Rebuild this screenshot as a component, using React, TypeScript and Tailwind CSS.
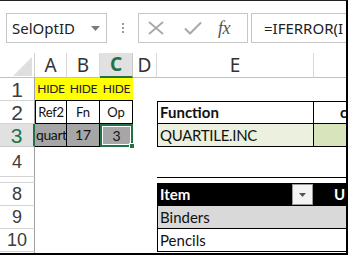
import React from 'react';

const cols = 'grid grid-cols-[35px_32px_33px_33px_24px_157px_32px] grid-rows-[100%]';
const cell = "font-['Lato',sans-serif] text-[#111] overflow-hidden whitespace-nowrap flex items-center";
const rowHead = "font-['Liberation_Sans',Arial,sans-serif] text-[#3c3c3c] border-r border-r-[#a0a0a0] border-b border-b-[#d4d4d4] flex items-center justify-center bg-white";

const App = () => {
  return (
    <div className="w-[348px] h-[255px] overflow-hidden bg-white leading-none border-t border-t-[#222] border-r-2 border-b-2 border-black">
      {/* Formula bar */}
      <div className="h-[52px] flex items-start pt-[12px]">
        <div className="ml-[6px] w-[101px] h-[30px] border border-[#c6c6c6] flex items-center pl-[5px] pr-[6px]">
          <span className="font-['Noto_Sans',sans-serif] text-[15px] text-[#222]">SelOptID</span>
          <svg className="ml-auto" width="9" height="5" viewBox="0 0 9 5">
            <path d="M0 0 H9 L4.5 5 Z" fill="#7a7a7a" />
          </svg>
        </div>
        <div className="w-[31px] h-[30px] flex flex-col items-center justify-center gap-[2px]">
          <span className="w-[2px] h-[2px] bg-[#9a9a9a]" />
          <span className="w-[2px] h-[2px] bg-[#9a9a9a]" />
          <span className="w-[2px] h-[2px] bg-[#9a9a9a]" />
        </div>
        <div className="w-[110px] h-[30px] border border-[#c6c6c6] flex items-center">
          <svg className="ml-[9px]" width="16" height="14" viewBox="0 0 16 14">
            <path d="M1 1 L15 13 M15 1 L1 13" stroke="#a8a8a8" strokeWidth="1.8" fill="none" />
          </svg>
          <svg className="ml-[20px]" width="18" height="14" viewBox="0 0 18 14">
            <path d="M1 7.5 L6 12.5 L17 1.5" stroke="#a8a8a8" strokeWidth="2" fill="none" />
          </svg>
          <span className="ml-[16px] font-['Liberation_Serif',serif] italic text-[18px] text-[#555] tracking-[-0.5px]">fx</span>
        </div>
        <div className="ml-[3px] flex-1 h-[30px] border border-r-0 border-[#c6c6c6] flex items-center pl-[12px] overflow-hidden whitespace-nowrap">
          <span className="font-['Noto_Sans',sans-serif] text-[15px] text-[#222]">=IFERROR(I</span>
        </div>
      </div>

      {/* Column headers */}
      <div className={`${cols} h-[25px] font-['Noto_Sans',sans-serif] text-[19px] text-[#333]`}>
        <div className="border-r border-r-[#d0d0d0] border-b border-b-[#c0c0c0] flex items-end justify-end pr-[2px] pb-[1px]">
          <svg width="19" height="19" viewBox="0 0 19 19">
            <path d="M19 0 V19 H0 Z" fill="#dfdfdf" />
          </svg>
        </div>
        <div className="border-r border-r-[#d8d8d8] border-b border-b-[#c0c0c0] flex items-center justify-center">A</div>
        <div className="border-r border-r-[#d8d8d8] border-b border-b-[#c0c0c0] flex items-center justify-center">B</div>
        <div className="bg-[#e1e1e1] border-r border-r-[#c8c8c8] border-b-2 border-b-[#217346] flex items-center justify-center font-bold text-[#217346]">C</div>
        <div className="border-r border-r-[#d8d8d8] border-b border-b-[#c0c0c0] flex items-center justify-center">D</div>
        <div className="border-r border-r-[#d8d8d8] border-b border-b-[#c0c0c0] flex items-center justify-center">E</div>
        <div className="border-b border-b-[#c0c0c0]" />
      </div>

      {/* Row 1 */}
      <div className={`${cols} h-[23px]`}>
        <div className={`${rowHead} text-[21px]`}>1</div>
        {['HIDE', 'HIDE', 'HIDE'].map((t, i) => (
          <div key={i} className={`${cell} justify-center bg-[#ffff00] border-b border-black text-[12px] text-[#222] tracking-[-0.3px]`}>{t}</div>
        ))}
        <div />
        <div />
        <div />
      </div>

      {/* Row 2 */}
      <div className={`${cols} h-[23px]`}>
        <div className={`${rowHead} text-[21px]`}>2</div>
        <div className={`${cell} justify-center border-l border-r border-b border-black text-[13px] tracking-[-0.3px]`}>Ref2</div>
        <div className={`${cell} justify-center border-r border-b border-black text-[13px]`}>Fn</div>
        <div className={`${cell} justify-center border-r border-b border-black text-[13px]`}>Op</div>
        <div />
        <div className={`${cell} border border-black pl-[2px] text-[15px] font-bold`}>Function</div>
        <div className={`${cell} border-t border-b border-black pl-[26px] text-[15px] font-bold`}>c</div>
      </div>

      {/* Row 3 */}
      <div className={`${cols} h-[23px]`}>
        <div className="font-['Liberation_Sans',Arial,sans-serif] text-[21px] text-[#217346] bg-[#e1e1e1] border-r-2 border-r-[#217346] border-b border-b-[#c8c8c8] flex items-center justify-center">3</div>
        <div className={`${cell} bg-[#a6a6a6] border-r border-b border-black text-[14px] pl-[1px] tracking-[-0.4px]`}>quart</div>
        <div className={`${cell} justify-center bg-[#a6a6a6] border-r border-b border-black text-[14px]`}>17</div>
        <div className="relative border-2 border-[#217346] bg-white p-[1px]">
          <div className={`${cell} justify-center h-full bg-[#a6a6a6] text-[14px]`}>3</div>
          <span className="absolute right-[-4px] bottom-[-4px] w-[6px] h-[6px] bg-[#217346] border border-white" />
        </div>
        <div />
        <div className={`${cell} bg-[#ebf1de] border-l border-r border-b border-black pl-[2px] text-[15px] tracking-[-0.3px]`}>QUARTILE.INC</div>
        <div className="bg-[#d8e4bc] border-b border-black" />
      </div>

      {/* Row 4 */}
      <div className={`${cols} h-[30px]`}>
        <div className={`${rowHead} text-[18px]`}>4</div>
        <div />
        <div />
        <div />
        <div />
        <div />
        <div />
      </div>

      {/* Hidden rows 5-7 */}
      <div className={`${cols} h-[6px]`}>
        <div className="border-r border-r-[#a0a0a0] border-b border-b-[#d4d4d4]" />
        <div />
        <div />
        <div />
        <div />
        <div className="border-t border-black" />
        <div className="border-t border-black" />
      </div>

      {/* Row 8 - table header */}
      <div className={`${cols} h-[23px]`}>
        <div className={`${rowHead} text-[18px]`}>8</div>
        <div />
        <div />
        <div />
        <div />
        <div className={`${cell} bg-black text-white font-bold text-[15px] pl-[3px] pr-[1px]`}>
          <span>Item</span>
          <div className="ml-auto w-[21px] h-[21px] bg-[#f3f3f3] border border-[#9a9a9a] flex items-center justify-center">
            <svg width="7" height="4" viewBox="0 0 7 4">
              <path d="M0 0 H7 L3.5 4 Z" fill="#555" />
            </svg>
          </div>
        </div>
        <div className={`${cell} bg-black text-white font-bold text-[15px] pl-[20px]`}>U</div>
      </div>

      {/* Row 9 */}
      <div className={`${cols} h-[23px]`}>
        <div className={`${rowHead} text-[18px]`}>9</div>
        <div />
        <div />
        <div />
        <div />
        <div className={`${cell} bg-[#d9d9d9] border-l border-b border-black pl-[2px] text-[15px]`}>Binders</div>
        <div className="bg-[#d9d9d9] border-b border-black" />
      </div>

      {/* Row 10 */}
      <div className={`${cols} h-[23px]`}>
        <div className={`${rowHead} text-[18px]`}>10</div>
        <div />
        <div />
        <div />
        <div />
        <div className={`${cell} border-l border-b border-black pl-[2px] text-[15px]`}>Pencils</div>
        <div className="border-b border-black" />
      </div>

      <div className={`${cols} h-[1px]`}>
        <div className="border-r border-r-[#a0a0a0]" />
      </div>
    </div>
  );
};

export default App;
